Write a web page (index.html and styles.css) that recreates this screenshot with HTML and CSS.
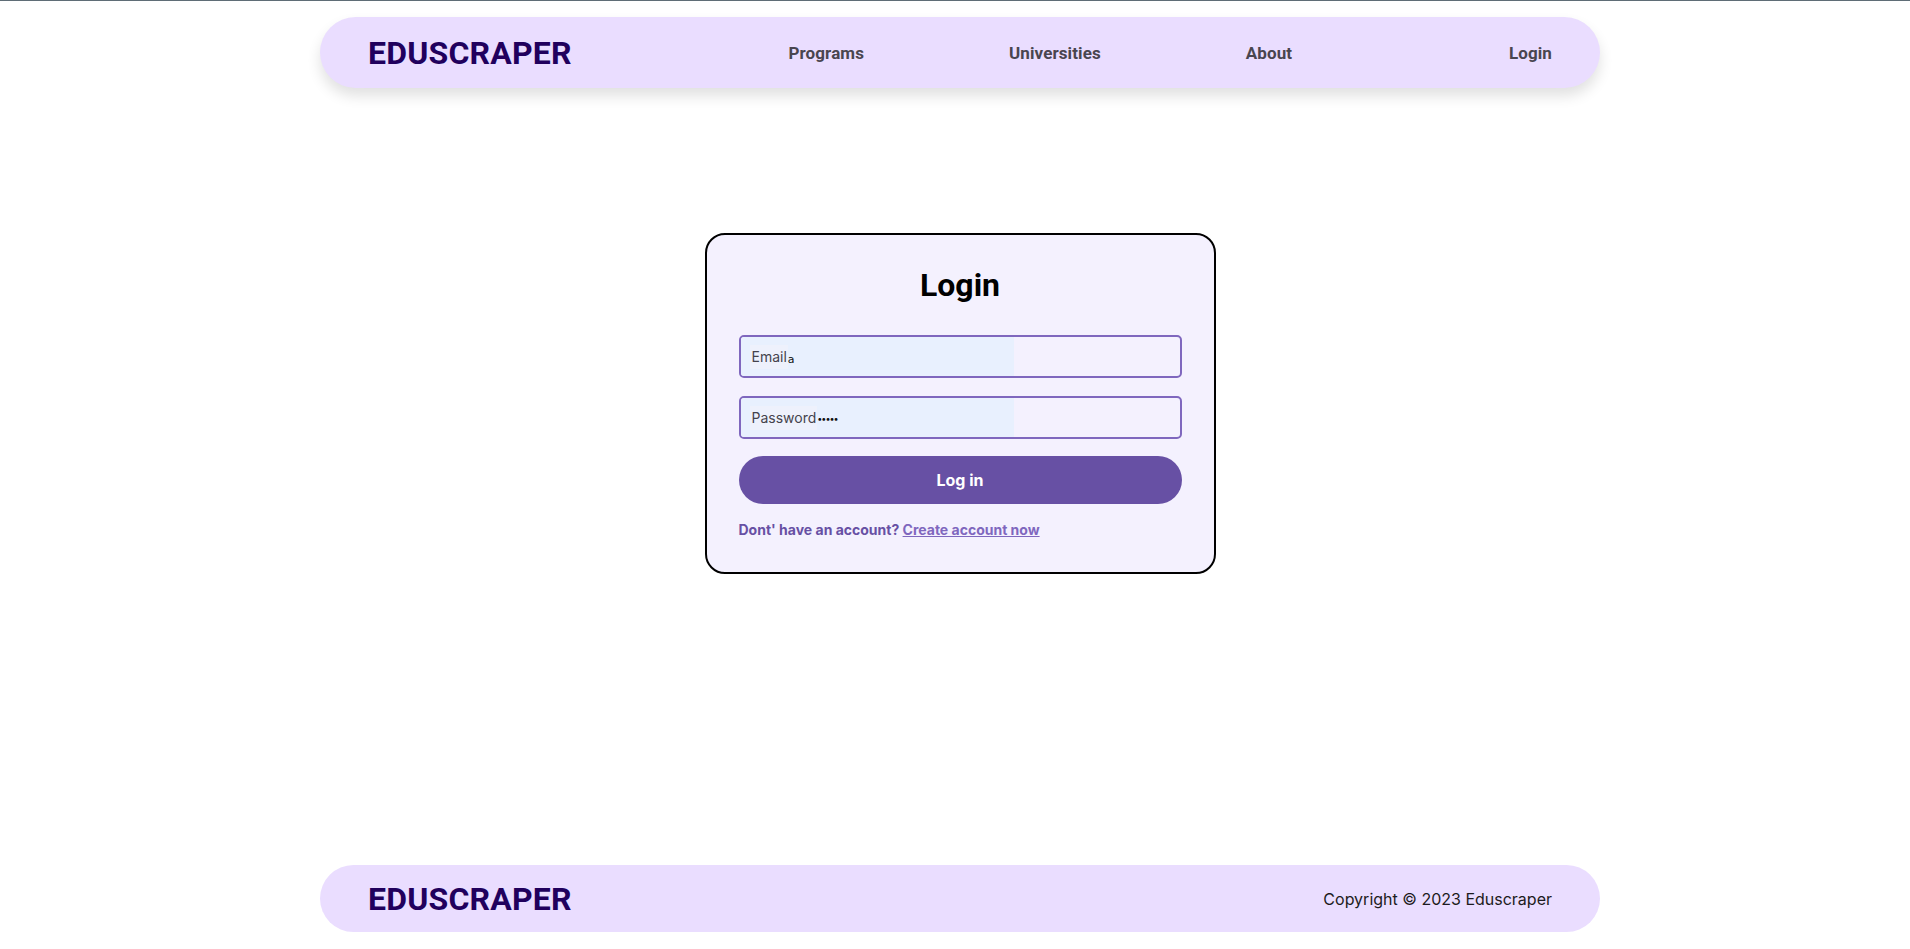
FILE: index.html
```html
<!DOCTYPE html>
<html lang="en">
<head>
<meta charset="utf-8">
<title>Eduscraper - Login</title>
<link rel="stylesheet" href="styles.css">
</head>
<body>
<div class="page">
  <header class="header">
    <div class="logo">EDUSCRAPER</div>
    <nav class="nav">
      <a class="nav-link" href="#">Programs</a>
      <a class="nav-link" href="#">Universities</a>
      <a class="nav-link" href="#">About</a>
    </nav>
    <a class="nav-link" href="#">Login</a>
  </header>

  <main class="main">
    <form class="card">
      <h1 class="card-title">Login</h1>
      <div class="fields">
        <div class="field">
          <div class="fill">
            <span class="label">Email</span><span class="value">a</span>
          </div>
        </div>
        <div class="field">
          <div class="fill">
            <span class="label">Password</span><span class="dots">•••••</span>
          </div>
        </div>
        <button class="btn" type="button">Log in</button>
      </div>
      <p class="signup">Dont' have an account? <a class="signup-link" href="#">Create account now</a></p>
    </form>
  </main>

  <footer class="footer">
    <div class="logo">EDUSCRAPER</div>
    <div class="copyright">Copyright © 2023 Eduscraper</div>
  </footer>
</div>
</body>
</html>
```

FILE: styles.css
```css
* { box-sizing: border-box; }

html, body {
  margin: 0;
  padding: 0;
  background: #ffffff;
}

body {
  border-top: 1px solid #5f6d76;
  font-family: Inter, "Noto Sans", sans-serif;
}

.page {
  min-height: calc(100vh - 1px);
  display: flex;
  flex-direction: column;
  padding-left: 10px;
}

.header,
.footer {
  width: 1280px;
  margin-left: auto;
  margin-right: auto;
  background: #eaddff;
  border-radius: 40px;
  display: flex;
  align-items: center;
  justify-content: space-between;
  padding: 0 48px;
}

.header {
  margin-top: 16px;
  height: 71px;
  box-shadow: 0 8px 14px rgba(0, 0, 0, 0.12);
}

.footer {
  height: 67px;
  margin-bottom: 17px;
}

.logo {
  font-family: Roboto, "Liberation Sans", sans-serif;
  font-weight: 700;
  font-size: 32px;
  color: #21005d;
  letter-spacing: 0.2px;
}

.nav {
  display: flex;
  gap: 145px;
}

.nav-link {
  font-family: Roboto, "Liberation Sans", sans-serif;
  font-weight: 700;
  font-size: 17px;
  color: #49454f;
  text-decoration: none;
  letter-spacing: 0.1px;
}

.main {
  flex: 1;
  display: flex;
  justify-content: center;
  align-items: flex-start;
  padding-top: 145px;
}

.card {
  width: 511px;
  background: #f4f1fe;
  border: 2px solid #000000;
  border-radius: 20px;
  padding: 32px;
  margin: 0;
}

.card-title {
  margin: -1px 0 31px;
  text-align: center;
  font-family: Roboto, "Liberation Sans", sans-serif;
  font-weight: 700;
  font-size: 32px;
  color: #000000;
}

.fields {
  display: flex;
  flex-direction: column;
  gap: 18px;
}

.field {
  height: 43px;
  border: 2px solid #7f67be;
  border-radius: 5px;
  display: flex;
  overflow: hidden;
}

.fill {
  flex: none;
  width: 273px;
  background: #e8f0fe;
  display: flex;
  align-items: center;
  padding-left: 9px;
}

.label {
  background: #eef1fc;
  color: #45434d;
  font-size: 14px;
  line-height: 24px;
  padding: 0 1px 0 2px;
}

.value {
  font-family: "DejaVu Sans", sans-serif;
  font-size: 11px;
  color: #111111;
  margin-top: 5px;
}

.dots {
  font-size: 9px;
  color: #111111;
  letter-spacing: -1px;
  margin-top: 1px;
}

.btn {
  height: 48px;
  border: none;
  border-radius: 24px;
  background: #6750a4;
  color: #ffffff;
  font-family: Inter, "Noto Sans", sans-serif;
  font-weight: 700;
  font-size: 16px;
  cursor: pointer;
  margin-top: -1px;
}

.signup {
  margin: 16px 0 0;
  font-size: 14px;
  font-weight: 700;
  color: #6750a4;
  line-height: 20px;
}

.signup-link {
  color: #7f67be;
  text-decoration: underline;
}

.copyright {
  font-family: Inter, "Noto Sans", sans-serif;
  font-size: 16px;
  color: #1d1b20;
}
```
